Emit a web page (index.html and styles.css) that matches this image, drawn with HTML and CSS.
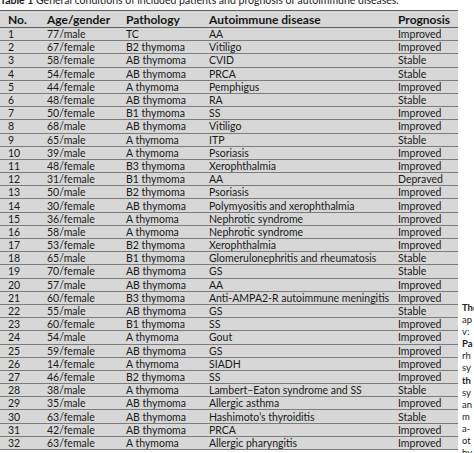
FILE: index.html
```html
<!DOCTYPE html>
<html>
<head>
<meta charset="utf-8">
<link rel="stylesheet" href="styles.css">
</head>
<body>
<div class="page">
  <div class="main">
    <div class="caption"><b>Table 1</b> General conditions of included patients and prognosis of autoimmune diseases.</div>
    <table class="tbl">
      <colgroup>
        <col class="c1"><col class="c2"><col class="c3"><col class="c4"><col class="c5">
      </colgroup>
      <thead>
        <tr><th>No.</th><th>Age/gender</th><th>Pathology</th><th>Autoimmune disease</th><th>Prognosis</th></tr>
      </thead>
      <tbody>
        <tr><td>1</td><td>77/male</td><td>TC</td><td>AA</td><td>Improved</td></tr>
        <tr><td>2</td><td>67/female</td><td>B2 thymoma</td><td>Vitiligo</td><td>Improved</td></tr>
        <tr><td>3</td><td>58/female</td><td>AB thymoma</td><td>CVID</td><td>Stable</td></tr>
        <tr><td>4</td><td>54/female</td><td>AB thymoma</td><td>PRCA</td><td>Stable</td></tr>
        <tr><td>5</td><td>44/female</td><td>A thymoma</td><td>Pemphigus</td><td>Improved</td></tr>
        <tr><td>6</td><td>48/female</td><td>AB thymoma</td><td>RA</td><td>Stable</td></tr>
        <tr><td>7</td><td>50/female</td><td>B1 thymoma</td><td>SS</td><td>Improved</td></tr>
        <tr><td>8</td><td>68/male</td><td>AB thymoma</td><td>Vitiligo</td><td>Improved</td></tr>
        <tr><td>9</td><td>65/male</td><td>A thymoma</td><td>ITP</td><td>Stable</td></tr>
        <tr><td>10</td><td>39/male</td><td>A thymoma</td><td>Psoriasis</td><td>Improved</td></tr>
        <tr><td>11</td><td>48/female</td><td>B3 thymoma</td><td>Xerophthalmia</td><td>Improved</td></tr>
        <tr><td>12</td><td>31/female</td><td>B1 thymoma</td><td>AA</td><td>Depraved</td></tr>
        <tr><td>13</td><td>50/male</td><td>B2 thymoma</td><td>Psoriasis</td><td>Improved</td></tr>
        <tr><td>14</td><td>30/female</td><td>AB thymoma</td><td>Polymyositis and xerophthalmia</td><td>Improved</td></tr>
        <tr><td>15</td><td>36/female</td><td>A thymoma</td><td>Nephrotic syndrome</td><td>Improved</td></tr>
        <tr><td>16</td><td>58/male</td><td>A thymoma</td><td>Nephrotic syndrome</td><td>Improved</td></tr>
        <tr><td>17</td><td>53/female</td><td>B2 thymoma</td><td>Xerophthalmia</td><td>Improved</td></tr>
        <tr><td>18</td><td>65/male</td><td>B1 thymoma</td><td>Glomerulonephritis and rheumatosis</td><td>Stable</td></tr>
        <tr><td>19</td><td>70/female</td><td>AB thymoma</td><td>GS</td><td>Stable</td></tr>
        <tr><td>20</td><td>57/male</td><td>AB thymoma</td><td>AA</td><td>Improved</td></tr>
        <tr><td>21</td><td>60/female</td><td>B3 thymoma</td><td>Anti-AMPA2-R autoimmune meningitis</td><td>Improved</td></tr>
        <tr><td>22</td><td>55/male</td><td>AB thymoma</td><td>GS</td><td>Stable</td></tr>
        <tr><td>23</td><td>60/female</td><td>B1 thymoma</td><td>SS</td><td>Improved</td></tr>
        <tr><td>24</td><td>54/male</td><td>A thymoma</td><td>Gout</td><td>Improved</td></tr>
        <tr><td>25</td><td>59/female</td><td>AB thymoma</td><td>GS</td><td>Improved</td></tr>
        <tr><td>26</td><td>14/female</td><td>A thymoma</td><td>SIADH</td><td>Improved</td></tr>
        <tr><td>27</td><td>46/female</td><td>B2 thymoma</td><td>SS</td><td>Improved</td></tr>
        <tr><td>28</td><td>38/male</td><td>A thymoma</td><td>Lambert–Eaton syndrome and SS</td><td>Stable</td></tr>
        <tr><td>29</td><td>35/male</td><td>AB thymoma</td><td>Allergic asthma</td><td>Improved</td></tr>
        <tr><td>30</td><td>63/female</td><td>AB thymoma</td><td>Hashimoto’s thyroiditis</td><td>Stable</td></tr>
        <tr><td>31</td><td>42/female</td><td>AB thymoma</td><td>PRCA</td><td>Improved</td></tr>
        <tr><td>32</td><td>63/female</td><td>A thymoma</td><td>Allergic pharyngitis</td><td>Improved</td></tr>
      </tbody>
    </table>
  </div>
  <div class="side">
    <div class="ln b">The</div>
    <div class="ln">ap</div>
    <div class="ln">v:</div>
    <div class="ln b">Pa</div>
    <div class="ln">rh</div>
    <div class="ln">sy</div>
    <div class="ln b">th</div>
    <div class="ln">sy</div>
    <div class="ln">an</div>
    <div class="ln">m</div>
    <div class="ln">a-</div>
    <div class="ln">ot</div>
    <div class="ln">hy</div>
  </div>
</div>
</body>
</html>
```

FILE: styles.css
```css
html, body {
  margin: 0;
  padding: 0;
  background: #ffffff;
}
body {
  width: 474px;
  height: 453px;
  overflow: hidden;
  font-family: Lato, "Liberation Sans", sans-serif;
  color: #1a1a1a;
}
.page {
  display: flex;
  align-items: flex-start;
  gap: 4px;
}
.main {
  width: 458px;
  flex: none;
}
.caption {
  font-size: 10.5px;
  line-height: 12px;
  margin-top: -6px;
  height: 16px;
  white-space: nowrap;
  overflow: hidden;
  color: #222;
}
.tbl {
  width: 458px;
  border-collapse: collapse;
  table-layout: fixed;
  background: #d7d7d7;
  font-size: 10.5px;
}
.c1 { width: 39px; }
.c2 { width: 79px; }
.c3 { width: 83px; }
.c4 { width: 189px; }
.c5 { width: 68px; }
.tbl th {
  text-align: left;
  font-weight: 700;
  font-size: 12px;
  height: 16px;
  padding: 0 0 0 8px;
  border-top: 1px solid #5e5e5e;
  border-bottom: 1px solid #5e5e5e;
  white-space: nowrap;
  color: #151515;
}
.tbl td {
  height: 12.2px;
  line-height: 12px;
  padding: 0 0 0 8px;
  border-bottom: 1px solid #7c7c7c;
  white-space: nowrap;
  overflow: hidden;
}
.side {
  margin-top: 302px;
  font-size: 9.5px;
  line-height: 12.1px;
  color: #222;
  white-space: nowrap;
}
.side .b {
  font-weight: 700;
}
```
